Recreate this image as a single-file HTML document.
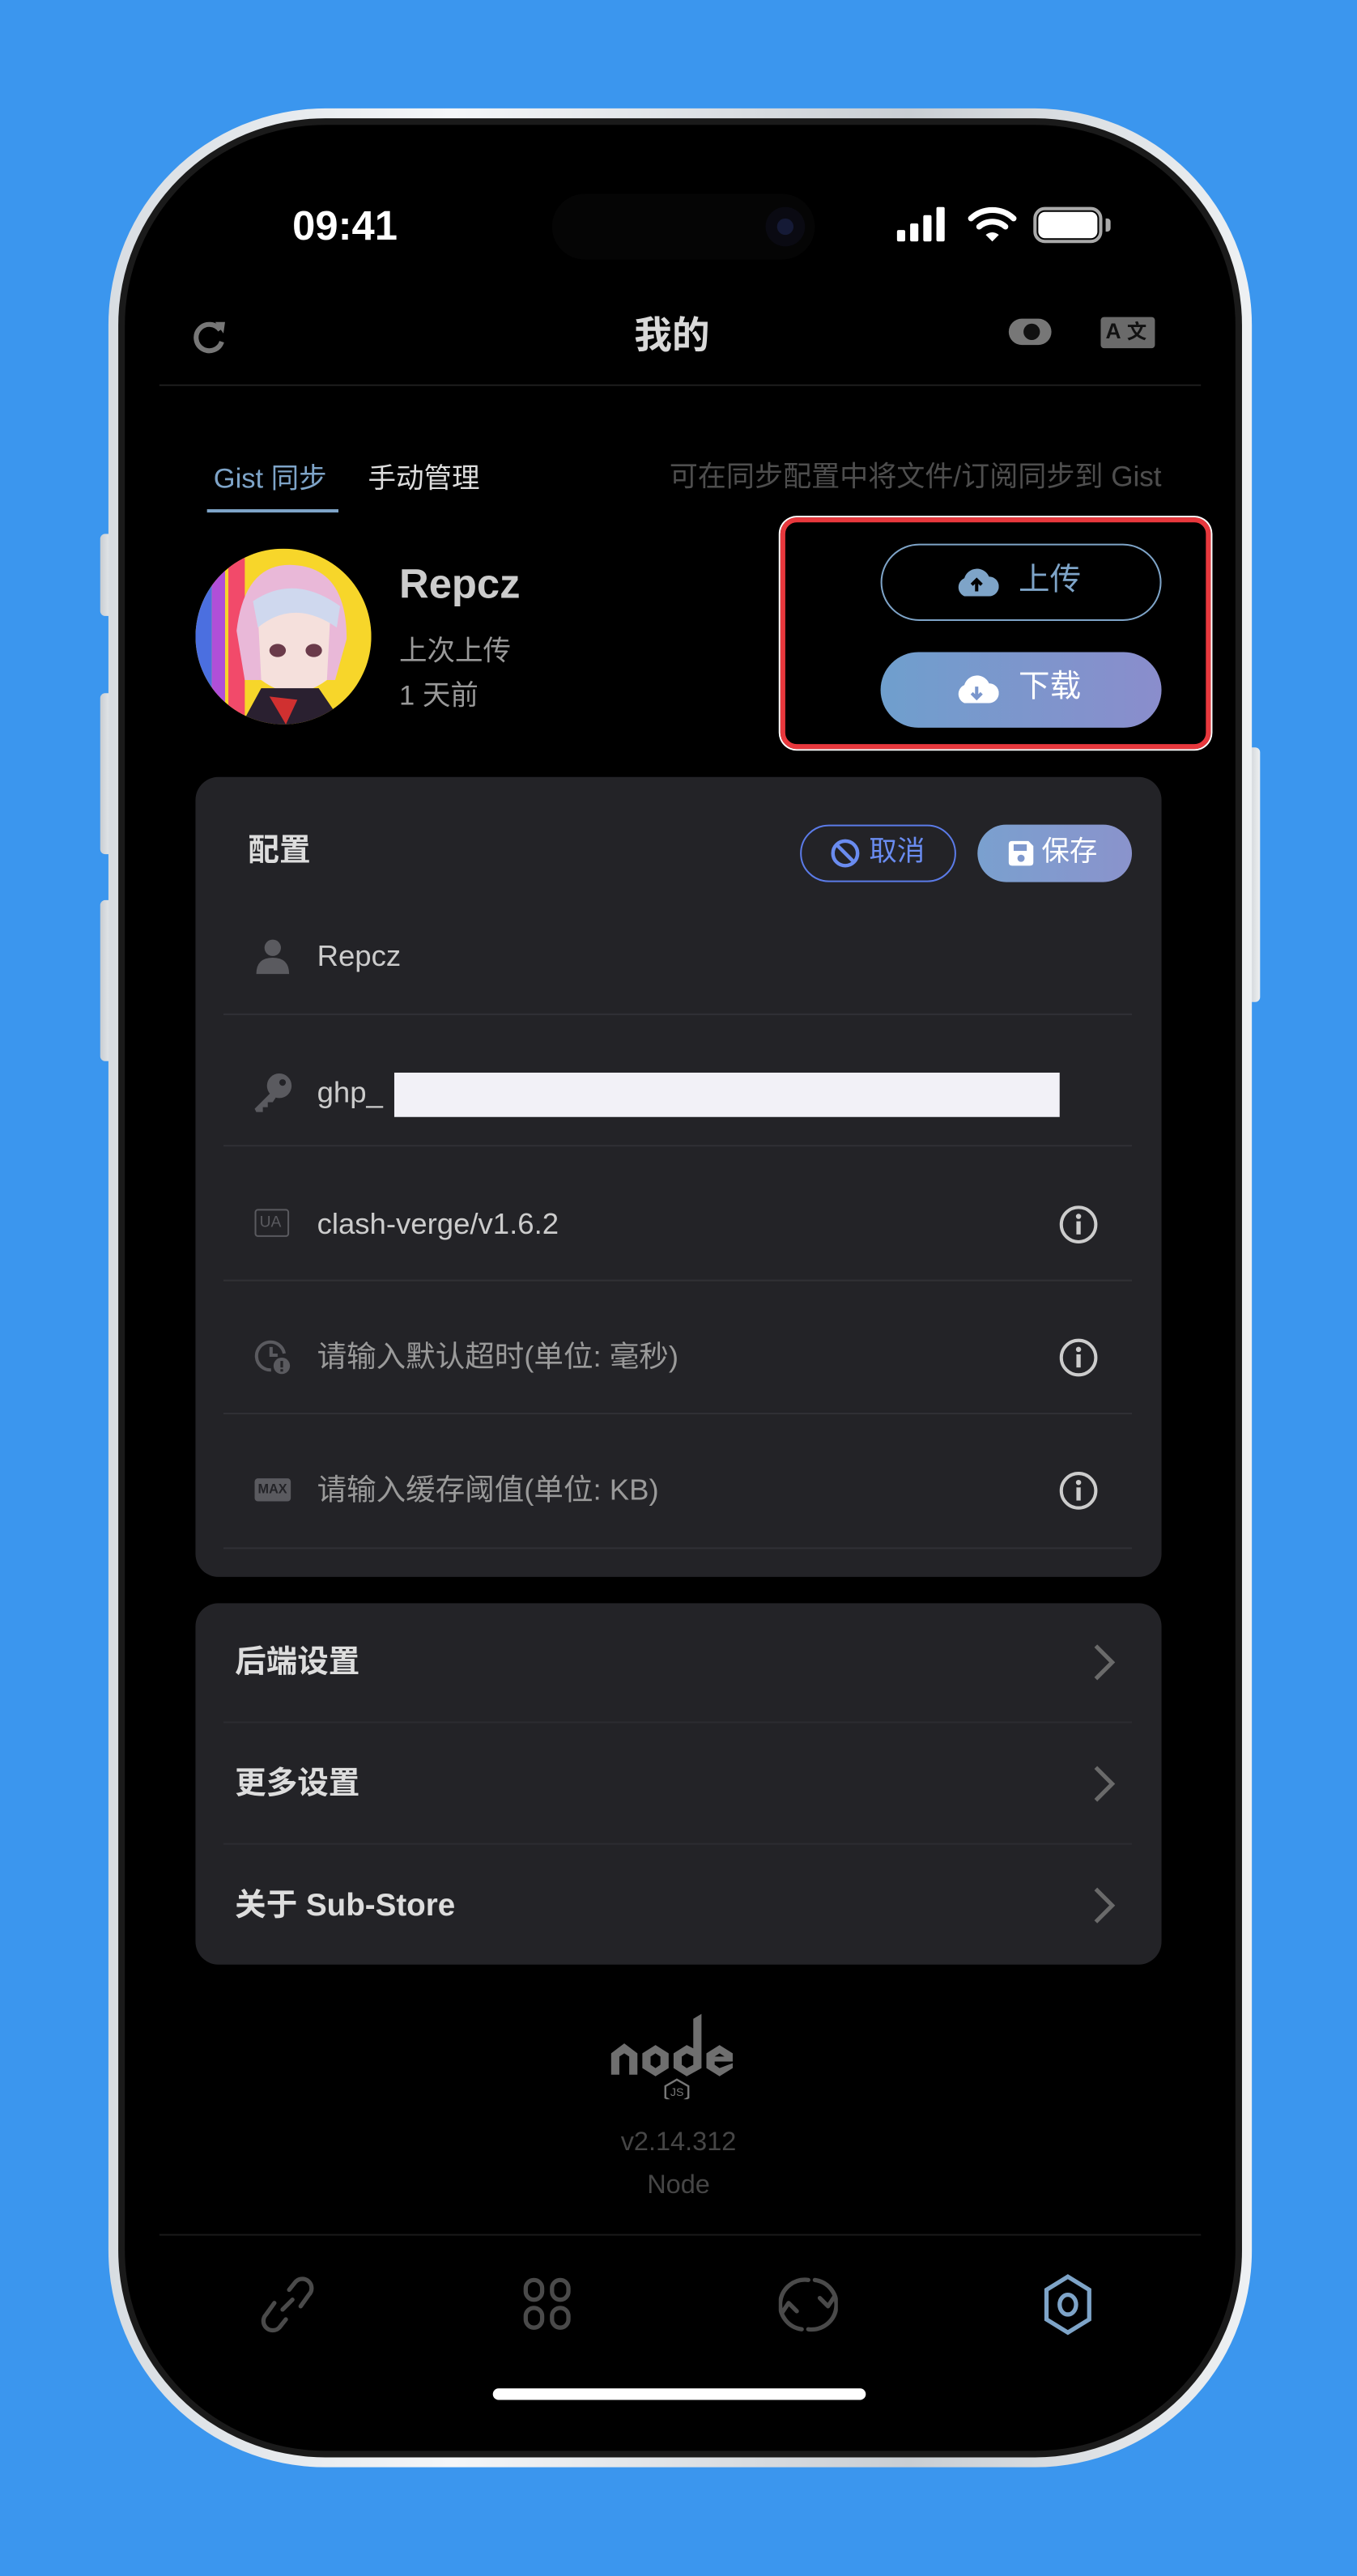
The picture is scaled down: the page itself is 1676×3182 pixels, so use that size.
<!DOCTYPE html>
<html><head><meta charset="utf-8">
<style>
*{margin:0;padding:0;box-sizing:border-box}
html,body{width:1676px;height:3182px;overflow:hidden;background:#3b96ee}
#s{position:absolute;left:0;top:0;width:826px;height:1568px;transform:scale(2.02906);transform-origin:0 0;font-family:"Liberation Sans","Noto Sans CJK SC",sans-serif}
.a{position:absolute}
.t{position:absolute;white-space:nowrap;line-height:1}
.frame{left:66px;top:66px;width:696px;height:1436px;border-radius:132px;background:linear-gradient(90deg,#d8dde2,#f4f6f8 30%,#c9ced3 70%,#eef1f3);}
.scr{left:76px;top:76px;width:676px;height:1416px;border-radius:122px;background:#000;overflow:hidden}
.btn{background:linear-gradient(90deg,#c8cdd2,#eef0f2)}
.card{background:#232327;border-radius:14px}
.sep{height:1px;background:#303035}
.row{color:#ccc;font-size:18px}
.ph{color:#9a9a9a;font-size:18px}
</style></head><body><div id="s">
<div class="a btn" style="left:61px;top:325px;width:8px;height:50px;border-radius:3px"></div>
<div class="a btn" style="left:61px;top:422px;width:8px;height:98px;border-radius:3px"></div>
<div class="a btn" style="left:61px;top:548px;width:8px;height:98px;border-radius:3px"></div>
<div class="a btn" style="left:759px;top:455px;width:8px;height:155px;border-radius:3px"></div>
<div class="a frame"></div>
<div class="a" style="left:72px;top:72px;width:684px;height:1424px;border-radius:126px;background:#1a1a1a"></div>
<div class="a scr">
 <div class="a" style="left:260px;top:42px;width:160px;height:40px;border-radius:20px;background:#050505"></div>
 <div class="a" style="left:390px;top:50px;width:24px;height:24px;border-radius:12px;background:#0a0a12"></div>
 <div class="a" style="left:397px;top:57px;width:10px;height:10px;border-radius:5px;background:#151a36"></div>
</div>
<!-- status bar -->
<div class="t" style="left:178px;top:126px;font-size:25px;font-weight:bold;color:#fff">09:41</div>
<svg class="a" style="left:545px;top:126px" width="36" height="22"><rect x="1" y="14" width="5" height="7" rx="1" fill="#fff"/><rect x="9" y="10" width="5" height="11" rx="1" fill="#fff"/><rect x="17" y="5" width="5" height="16" rx="1" fill="#fff"/><rect x="25" y="0" width="5" height="21" rx="1" fill="#fff"/></svg>
<svg class="a" style="left:589px;top:125px" width="30" height="24" viewBox="0 0 30 24"><path d="M2 8 A19 19 0 0 1 28 8" stroke="#fff" stroke-width="3.5" fill="none" stroke-linecap="round"/><path d="M7 13 A12 12 0 0 1 23 13" stroke="#fff" stroke-width="3.5" fill="none" stroke-linecap="round"/><path d="M11 18 L15 22 L19 18 A6 6 0 0 0 11 18Z" fill="#fff"/></svg>
<div class="a" style="left:629px;top:126px;width:42px;height:22px;border:2px solid #aaa;border-radius:7px"></div>
<div class="a" style="left:632px;top:129px;width:36px;height:16px;background:#fff;border-radius:4px"></div>
<div class="a" style="left:673px;top:133px;width:3px;height:8px;background:#aaa;border-radius:0 2px 2px 0"></div>
<!-- header -->
<svg class="a" style="left:117px;top:194px" width="22" height="22" viewBox="0 0 22 22"><path d="M17 7 A8 8 0 1 0 18 14" stroke="#777" stroke-width="3" fill="none"/><path d="M14 2 L20 2 L19 9Z" fill="#777"/></svg>
<div class="t" style="left:386px;top:193px;font-size:23px;font-weight:bold;color:#d8d8d8">我的</div>
<div class="a" style="left:614px;top:194px;width:26px;height:16px;border-radius:8px;background:#777"></div>
<div class="a" style="left:623px;top:197px;width:10px;height:10px;border-radius:5px;background:#111"></div>
<div class="a" style="left:670px;top:193px;width:33px;height:19px;background:#6a6a6a;border-radius:2px"></div>
<div class="t" style="left:673px;top:195px;font-size:13px;font-weight:bold;color:#111">A</div>
<div class="t" style="left:686px;top:196px;font-size:12px;font-weight:bold;color:#111">文</div>
<div class="a" style="left:97px;top:234px;width:634px;height:1px;background:#1c1c1c"></div>
<!-- tabs -->
<div class="t" style="left:130px;top:283px;font-size:17px;color:#7ea4c8">Gist 同步</div>
<div class="a" style="left:126px;top:310px;width:80px;height:2px;background:#7ea4c8"></div>
<div class="t" style="left:224px;top:283px;font-size:17px;color:#ddd">手动管理</div>
<div class="t" style="right:119px;top:282px;font-size:17.3px;color:#4e4e4e">可在同步配置中将文件/订阅同步到 Gist</div>
<!-- avatar -->
<svg class="a" style="left:119px;top:334px" width="107" height="107" viewBox="0 0 107 107"><defs><clipPath id="c"><circle cx="53.5" cy="53.5" r="53.5"/></clipPath></defs><g clip-path="url(#c)"><rect width="107" height="107" fill="#f7d62a"/><rect x="0" width="10" height="107" fill="#4b6fe0"/><rect x="10" width="8" height="107" fill="#b04fd8"/><rect x="20" width="10" height="107" fill="#f24a6a"/><path d="M25 50 Q30 8 60 10 Q92 12 92 55 L85 80 L30 80Z" fill="#e9b8d8"/><path d="M38 40 Q60 25 82 42 L80 80 Q60 95 40 80Z" fill="#f5e0dc"/><path d="M35 32 Q60 15 88 35 L86 48 Q60 30 38 48Z" fill="#cfd8ee"/><ellipse cx="50" cy="62" rx="5" ry="4" fill="#6a3a4a"/><ellipse cx="72" cy="62" rx="5" ry="4" fill="#6a3a4a"/><path d="M28 107 L40 85 L75 85 L90 107Z" fill="#2a2030"/><path d="M45 90 L55 107 L62 92Z" fill="#d03030"/></g></svg>
<div class="t" style="left:243px;top:344px;font-size:25px;font-weight:bold;color:#ccc">Repcz</div>
<div class="t" style="left:243px;top:388px;font-size:17px;color:#999">上次上传</div>
<div class="t" style="left:243px;top:415px;font-size:17px;color:#999">1 天前</div>
<!-- red box -->
<div class="a" style="left:475px;top:315px;width:262px;height:141px;border:3.5px solid #e8383d;border-radius:10px;box-shadow:0 0 0 1px #fff"></div>
<div class="a" style="left:536px;top:331px;width:171px;height:47px;border:1.5px solid #7ea4c8;border-radius:24px"></div>
<svg class="a" style="left:581px;top:344px" width="27" height="20" viewBox="0 0 27 20"><path d="M6 19 A6 6 0 0 1 6 8 A8 8 0 0 1 21 7 A6 6 0 0 1 21 19Z" fill="#7ea4c8"/><path d="M13.5 16 V9 M10.5 12 L13.5 9 L16.5 12" stroke="#000" stroke-width="2" fill="none"/></svg>
<div class="t" style="left:620px;top:344px;font-size:19px;color:#7ea4c8">上传</div>
<div class="a" style="left:536px;top:397px;width:171px;height:46px;border-radius:23px;background:linear-gradient(90deg,#6f9fcd,#8a8dcc)"></div>
<svg class="a" style="left:581px;top:409px" width="27" height="20" viewBox="0 0 27 20"><path d="M6 19 A6 6 0 0 1 6 8 A8 8 0 0 1 21 7 A6 6 0 0 1 21 19Z" fill="#fff"/><path d="M13.5 9 V16 M10.5 13 L13.5 16 L16.5 13" stroke="#7a96cc" stroke-width="2" fill="none"/></svg>
<div class="t" style="left:620px;top:409px;font-size:19px;color:#fff">下载</div>
<!-- config card -->
<div class="a card" style="left:119px;top:473px;width:588px;height:487px"></div>
<div class="t" style="left:151px;top:509px;font-size:19px;font-weight:bold;color:#ddd">配置</div>
<div class="a" style="left:487px;top:502px;width:95px;height:35px;border:1.5px solid #5b7be8;border-radius:18px"></div>
<svg class="a" style="left:505px;top:510px" width="19" height="19" viewBox="0 0 19 19"><circle cx="9.5" cy="9.5" r="7.5" stroke="#6a8cf0" stroke-width="2.2" fill="none"/><path d="M4.5 4.5 L14.5 14.5" stroke="#6a8cf0" stroke-width="2.2"/></svg>
<div class="t" style="left:529px;top:510px;font-size:17px;color:#6a8cf0">取消</div>
<div class="a" style="left:595px;top:502px;width:94px;height:35px;border-radius:18px;background:linear-gradient(90deg,#7aa0cf,#8a93cc)"></div>
<svg class="a" style="left:613px;top:511px" width="17" height="17" viewBox="0 0 17 17"><path d="M1 3 Q1 1 3 1 H13 L16 4 V14 Q16 16 14 16 H3 Q1 16 1 14Z" fill="#fff"/><rect x="4" y="3" width="8" height="4" fill="#7e98cd"/><circle cx="8.5" cy="11.5" r="2.2" fill="#7e98cd"/></svg>
<div class="t" style="left:634px;top:510px;font-size:17px;color:#fff">保存</div>
<!-- rows -->
<svg class="a" style="left:155px;top:571px" width="22" height="22" viewBox="0 0 22 22"><circle cx="11" cy="6" r="5" fill="#5a5a5f"/><path d="M1 22 Q1 12 11 12 Q21 12 21 22Z" fill="#5a5a5f"/></svg>
<div class="t row" style="left:193px;top:573px">Repcz</div>
<div class="a sep" style="left:136px;top:617px;width:553px"></div>
<svg class="a" style="left:153px;top:652px" width="26" height="26" viewBox="0 0 26 26"><circle cx="17" cy="9" r="7.5" fill="#5a5a5f"/><path d="M12 13 L2 23 L3 25 L7 25 L7 22 L10 22 L10 19 L13 19 L15 16Z" fill="#5a5a5f"/><circle cx="19" cy="7" r="2" fill="#232327"/></svg>
<div class="t row" style="left:193px;top:656px">ghp_</div>
<div class="a" style="left:240px;top:653px;width:405px;height:27px;background:#f2f1f7"></div>
<div class="a sep" style="left:136px;top:697px;width:553px"></div>
<div class="a" style="left:155px;top:736px;width:21px;height:17px;border:1.5px solid #5a5a5f;border-radius:2px"></div>
<div class="t" style="left:158px;top:740px;font-size:9.5px;color:#5a5a5f">UA</div>
<div class="t row" style="left:193px;top:736px">clash-verge/v1.6.2</div>
<div class="a sep" style="left:136px;top:779px;width:553px"></div>
<svg class="a" style="left:155px;top:815px" width="22" height="22" viewBox="0 0 22 22"><path d="M18 9 A8.5 8.5 0 1 0 10 19" stroke="#5a5a5f" stroke-width="2" fill="none"/><path d="M10 5 V10 H14" stroke="#5a5a5f" stroke-width="2" fill="none"/><circle cx="16.5" cy="16.5" r="5" fill="#5a5a5f"/><rect x="15.7" y="13.5" width="1.6" height="4" fill="#232327"/><rect x="15.7" y="18.5" width="1.6" height="1.5" fill="#232327"/></svg>
<div class="t ph" style="left:193px;top:817px">请输入默认超时(单位: 毫秒)</div>
<div class="a sep" style="left:136px;top:860px;width:553px"></div>
<div class="a" style="left:155px;top:900px;width:22px;height:14px;background:#5a5a5f;border-radius:2px"></div>
<div class="t" style="left:157px;top:903px;font-size:8px;font-weight:bold;color:#232327">MAX</div>
<div class="t ph" style="left:193px;top:898px">请输入缓存阈值(单位: KB)</div>
<div class="a sep" style="left:136px;top:942px;width:553px"></div>
<svg class="a" style="left:644px;top:733px" width="25" height="200" viewBox="0 0 25 200"><g fill="none" stroke="#ccc" stroke-width="2"><circle cx="12.5" cy="12.5" r="10.5"/><circle cx="12.5" cy="93.5" r="10.5"/><circle cx="12.5" cy="174.5" r="10.5"/></g><g fill="#ccc"><circle cx="12.5" cy="7.5" r="1.6"/><rect x="11.2" y="10.5" width="2.6" height="8"/><circle cx="12.5" cy="88.5" r="1.6"/><rect x="11.2" y="91.5" width="2.6" height="8"/><circle cx="12.5" cy="169.5" r="1.6"/><rect x="11.2" y="172.5" width="2.6" height="8"/></g></svg>
<!-- settings card -->
<div class="a card" style="left:119px;top:976px;width:588px;height:220px"></div>
<div class="t" style="left:143px;top:1003px;font-size:19px;font-weight:bold;color:#ddd">后端设置</div>
<div class="a sep" style="left:136px;top:1048px;width:553px;background:#2c2c31"></div>
<div class="t" style="left:143px;top:1077px;font-size:19px;font-weight:bold;color:#ddd">更多设置</div>
<div class="a sep" style="left:136px;top:1122px;width:553px;background:#2c2c31"></div>
<div class="t" style="left:143px;top:1151px;font-size:19px;font-weight:bold;color:#ddd">关于 Sub-Store</div>
<svg class="a" style="left:664px;top:1000px" width="16" height="175" viewBox="0 0 16 175"><g stroke="#6a6a6a" stroke-width="2.5" fill="none"><path d="M3 2 L13 12 L3 22"/><path d="M3 76 L13 86 L3 96"/><path d="M3 150 L13 160 L3 170"/></g></svg>
<!-- node logo -->
<svg class="a" style="left:370px;top:1226px" width="86" height="52" viewBox="0 0 86 52"><g fill="#6f6f6f"><path d="M2 24 L10 18 L18 24 V37 H13 V26 L10 24 L7 26 V37 H2Z"/><path d="M21 24 L29 19 L37 24 V33 L29 38 L21 33Z M26 26 V31 L29 33 L32 31 V26 L29 24Z" fill-rule="evenodd"/><path d="M40 24 L48 19 L52 21 V3 L57 0 V33 L48 38 L40 33Z M45 26 V31 L48 33 L52 31 V26 L48 24Z" fill-rule="evenodd"/><path d="M60 24 L68 19 L76 24 V29 H65 V31 L68 33 L76 30 V33 L68 38 L60 33Z M65 26 H71 L68 24Z" fill-rule="evenodd"/></g><path d="M42 40 L49 44 V51 L42 55 L35 51 V44Z" stroke="#777" stroke-width="1.2" fill="none"/><text x="38" y="50" font-size="7" fill="#777" font-family="Liberation Sans">JS</text></svg>
<div class="t" style="left:0;width:826px;text-align:center;top:1297px;font-size:16px;color:#464646">v2.14.312</div>
<div class="t" style="left:0;width:826px;text-align:center;top:1323px;font-size:16px;color:#464646">Node</div>
<div class="a" style="left:97px;top:1360px;width:634px;height:1px;background:#1a1a1a"></div>
<!-- tab bar -->
<svg class="a" style="left:158px;top:1385px" width="34" height="36" viewBox="0 0 34 36"><g stroke="#4a4a4a" stroke-width="2.6" fill="none" stroke-linecap="round"><path d="M18 9 L22 4 A5 5 0 0 1 30 12 L25 19"/><path d="M16 27 L12 32 A5 5 0 0 1 4 24 L9 17"/><path d="M20 15 L14 21"/></g></svg>
<svg class="a" style="left:318px;top:1386px" width="30" height="33" viewBox="0 0 30 33"><g stroke="#4a4a4a" stroke-width="2.6" fill="none"><rect x="2" y="2" width="10" height="12" rx="5"/><rect x="18" y="2" width="10" height="12" rx="5"/><rect x="2" y="19" width="10" height="12" rx="5"/><rect x="18" y="19" width="10" height="12" rx="5"/></g></svg>
<svg class="a" style="left:474px;top:1384px" width="36" height="38" viewBox="0 0 36 38"><g stroke="#4a4a4a" stroke-width="2.6" fill="none" stroke-linecap="round" stroke-linejoin="round"><path d="M14 34 A15 15 0 0 1 18 4"/><path d="M22 4 A15 15 0 0 1 18 34"/><path d="M25 15 L30 20 L34 14"/><path d="M11 23 L6 18 L2 24"/></g></svg>
<svg class="a" style="left:634px;top:1384px" width="32" height="38" viewBox="0 0 32 38"><g stroke="#7ea4c8" stroke-width="2.6" fill="none"><path d="M16 2 L29 10 V28 L16 36 L3 28 V10Z"/><ellipse cx="16" cy="19" rx="5" ry="6"/></g></svg>
<div class="a" style="left:300px;top:1454px;width:227px;height:7px;border-radius:4px;background:#fff"></div>
</div></body></html>
